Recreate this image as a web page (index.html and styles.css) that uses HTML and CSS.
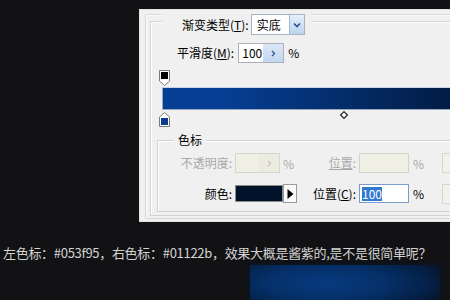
FILE: index.html
```html
<!DOCTYPE html>
<html lang="zh">
<head>
<meta charset="utf-8">
<link rel="stylesheet" href="styles.css">
</head>
<body>
<div class="dialog">
  <div class="frame">
    <div class="group1">
      <div class="group-head">
        <span class="lbl">渐变类型(<u>T</u>):</span>
        <div class="select">
          <span class="select-text">实底</span>
          <span class="select-btn"><svg width="8" height="6" viewBox="0 0 8 6"><path d="M1 1.5 L4 4.5 L7 1.5" fill="none" stroke="#2b4f8a" stroke-width="1.6"/></svg></span>
        </div>
      </div>
      <div class="row-smooth">
        <span class="lbl">平滑度(<u>M</u>):</span>
        <div class="spin">
          <span class="spin-val">100</span>
          <span class="spin-btn"><svg width="5" height="7" viewBox="0 0 5 7"><path d="M1 1 L3.5 3.5 L1 6" fill="none" stroke="#3a5f95" stroke-width="1.4"/></svg></span>
        </div>
        <span class="lbl">%</span>
      </div>
      <div class="stops-top">
        <svg width="11" height="16" viewBox="0 0 11 16"><path d="M0.5 0.5 H10.5 V11 L5.5 15.5 L0.5 11 Z" fill="#fff" stroke="#7a7a7a"/><rect x="2" y="2" width="7" height="7" fill="#000"/></svg>
      </div>
      <div class="bar"></div>
      <div class="stops-bottom">
        <svg class="stop-b" width="11" height="15" viewBox="0 0 11 15"><path d="M0.5 14.5 H10.5 V5 L5.5 0.5 L0.5 5 Z" fill="#fff" stroke="#7a7a7a"/><rect x="2" y="6" width="7" height="7" fill="#0a3d8f"/></svg>
        <svg class="diamond" width="8" height="8" viewBox="0 0 8 8"><path d="M4 0.7 L7.3 4 L4 7.3 L0.7 4 Z" fill="#fff" stroke="#222" stroke-width="1.2"/></svg>
      </div>
      <div class="group2">
        <div class="legend">色标</div>
        <div class="row row-a">
          <span class="lbl1 dis">不透明度:</span>
          <div class="spin dis-box w45">
            <span class="spin-val"></span>
            <span class="spin-btn dis-btn"><svg width="5" height="7" viewBox="0 0 5 7"><path d="M1 1 L3.5 3.5 L1 6" fill="none" stroke="#c4c4c4" stroke-width="1.4"/></svg></span>
          </div>
          <span class="pct dis">%</span>
          <span class="lbl2 dis"><u>位置</u>:</span>
          <div class="field dis-box"></div>
          <span class="pct2 dis">%</span>
          <div class="btn-off"></div>
        </div>
        <div class="row row-b">
          <span class="lbl1">颜色:</span>
          <div class="swatch"></div>
          <div class="swatch-btn"><svg width="7" height="10" viewBox="0 0 7 10"><path d="M0.5 0 L6.5 5 L0.5 10 Z" fill="#000"/></svg></div>
          <span class="lbl2 lbl2b">位置(<u>C</u>):</span>
          <div class="field field-on"><span class="sel">100</span></div>
          <span class="pct2">%</span>
          <div class="btn-off"></div>
        </div>
      </div>
    </div>
  </div>
</div>
<p class="caption">左色标：#053f95，右色标：#01122b，效果大概是酱紫的,是不是很简单呢？</p>
<div class="result"></div>
</body>
</html>
```
FILE: styles.css
```css
html, body {
  margin: 0;
  padding: 0;
  width: 450px;
  height: 300px;
  overflow: hidden;
}
body {
  background: #121214;
  font-family: "Noto Sans CJK SC", "Noto Sans", sans-serif;
  color: #000;
}
.dialog {
  margin: 9px 0 0 139px;
  width: 340px;
  height: 213px;
  box-sizing: border-box;
  background: #f0f0f0;
  border: 1px solid #e2e2e2;
  border-right: none;
  padding: 4px 0 0 5px;
}
.frame {
  height: 205px;
  box-sizing: border-box;
  border: 1px solid #d8d8d8;
  border-right: none;
  box-shadow: inset 1px 1px 0 #fbfbfb;
  padding: 6px 0 0 4px;
}
.group1 {
  height: 195px;
  box-sizing: border-box;
  border: 1px solid #d2d2d2;
  border-right: none;
  box-shadow: inset 1px 1px 0 #fff;
}
.lbl {
  font-size: 12px;
  line-height: 14px;
  white-space: nowrap;
}
.group-head {
  display: flex;
  align-items: center;
  gap: 2px;
  width: max-content;
  height: 21px;
  margin: -8px 0 0 11px;
  padding: 0 6px 0 20px;
  background: #f0f0f0;
}
.select {
  width: 54px;
  height: 21px;
  box-sizing: border-box;
  border: 1px solid #a7b3c4;
  background: #fff;
  display: flex;
}
.select-text {
  flex: 1;
  padding-left: 5px;
  font-size: 12px;
  line-height: 19px;
}
.select-btn {
  width: 14px;
  background: linear-gradient(#e6effa, #bcd3ef);
  border-left: 1px solid #9db6d9;
  display: flex;
  align-items: center;
  justify-content: center;
}
.row-smooth {
  display: flex;
  align-items: center;
  gap: 4px;
  height: 20px;
  margin: 8px 0 0 26px;
}
.spin {
  width: 46px;
  height: 20px;
  box-sizing: border-box;
  border: 1px solid #abb0ba;
  background: #fff;
  display: flex;
}
.spin-val {
  flex: 1;
  padding-left: 3px;
  font-size: 12px;
  line-height: 18px;
}
.spin-btn {
  width: 20px;
  background: linear-gradient(#dbe7f7, #c3d7f1);
  display: flex;
  align-items: center;
  justify-content: center;
}
.stops-top {
  height: 16px;
  margin: 7px 0 0 8px;
  display: flex;
}
.bar {
  margin: 1px 0 0 11px;
  width: 360px;
  height: 23px;
  box-sizing: border-box;
  border: 1px solid #9aa7bd;
  border-top-color: #c9d3e3;
  background: linear-gradient(to right, #053f95 0%, #053e93 18%, #01122b 100%);
}
.stops-bottom {
  display: flex;
  align-items: flex-start;
  height: 15px;
  margin: 2px 0 0 8px;
}
.diamond {
  margin: -1px 0 0 170px;
}
.group2 {
  margin: 13px 0 0 6px;
  height: 72px;
  box-sizing: border-box;
  border: 1px solid #d2d2d2;
  border-right: none;
  box-shadow: inset 1px 1px 0 #fff;
}
.legend {
  width: max-content;
  margin: -9px 0 0 16px;
  padding: 0 4px;
  background: #f0f0f0;
  font-size: 12px;
  line-height: 16px;
}
.row {
  display: flex;
  align-items: center;
}
.row > * {
  flex-shrink: 0;
}
.row-a {
  height: 20px;
  margin-top: 5px;
}
.row-b {
  height: 19px;
  margin-top: 11px;
}
.lbl1 {
  width: 74px;
  text-align: right;
  font-size: 12px;
  line-height: 14px;
  white-space: nowrap;
}
.dis {
  color: #a8a8a8;
}
.dis-box {
  background: #f0efe3;
  border-color: #d6d6d0;
}
.w45 {
  width: 45px;
  margin-left: 3px;
}
.dis-btn {
  background: #ecebe0;
}
.pct {
  width: 12px;
  margin-left: 3px;
  font-size: 12px;
}
.lbl2 {
  width: 61px;
  text-align: right;
  font-size: 12px;
  line-height: 14px;
  white-space: nowrap;
}
.lbl2b {
  width: 59px;
}
.field {
  width: 50px;
  height: 20px;
  box-sizing: border-box;
  margin-left: 3px;
  border: 1px solid #d2d2cc;
}
.field-on {
  height: 19px;
  background: #fff;
  border-color: #7a9cc8;
  display: flex;
  align-items: center;
  padding-left: 2px;
}
.sel {
  background: #3178d0;
  color: #fff;
  font-size: 12px;
  line-height: 14px;
}
.pct2 {
  width: 12px;
  margin-left: 4px;
  font-size: 12px;
}
.btn-off {
  width: 60px;
  height: 20px;
  box-sizing: border-box;
  margin-left: 17px;
  border: 1px solid #d6d6d0;
  background: #f3f2e8;
}
.swatch {
  width: 48px;
  height: 17px;
  box-sizing: border-box;
  margin-left: 3px;
  border: 1px solid #8c8c8c;
  background: #01122b;
}
.swatch-btn {
  width: 14px;
  height: 19px;
  box-sizing: border-box;
  border: 1px solid #9a9a9a;
  background: #fafafa;
  display: flex;
  align-items: center;
  justify-content: center;
}
.caption {
  margin: 22px 0 0 3px;
  font-size: 13px;
  line-height: 18px;
  color: #d4d4d4;
  white-space: nowrap;
  letter-spacing: -0.3px;
}
.result {
  margin: 3px 0 0 250px;
  width: 190px;
  height: 40px;
  background: radial-gradient(ellipse 70% 90% at 40% 45%, #073a80 0%, #053068 45%, #041f45 80%, #0b1220 100%);
  box-shadow: 0 0 4px 2px #0b1424;
}
```
